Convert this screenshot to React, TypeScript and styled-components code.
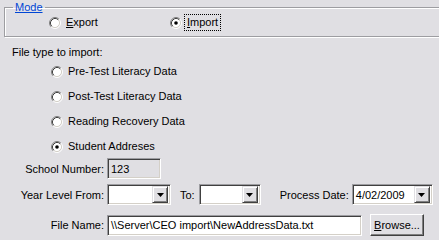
import React from 'react';
import styled, { createGlobalStyle } from 'styled-components';

const face = '#e0dfe3';

const GlobalStyle = createGlobalStyle`
	html, body {
		margin: 0;
		background: ${face};
		overflow: hidden;
	}
	body {
		font-family: 'Liberation Sans', Arial, sans-serif;
		font-size: 11px;
		color: #000;
	}
`;

const Page = styled.div`
	width: 439px;
	height: 239px;
	display: flex;
	flex-direction: column;
`;

const GroupBox = styled.fieldset`
	margin: 0 -20px 0 4px;
	padding: 0 0 5px 0;
	min-width: 0;
	border: 1px solid #9d9da1;
	box-shadow: inset 1px 1px 0 #fff, 1px 1px 0 #fff;
`;

const Legend = styled.legend`
	margin-left: 8px;
	padding: 0 2px;
	line-height: 14px;
	color: #0046d5;
	text-decoration: underline;
`;

const ModeRow = styled.div`
	display: grid;
	grid-template-columns: 121px auto;
	margin-left: 44px;
`;

const Caption = styled.div`
	margin: 9px 0 0 12px;
	line-height: 13px;
`;

const RadioList = styled.div`
	display: flex;
	flex-direction: column;
	gap: 8px;
	margin: 4px 0 0 51px;
`;

const RadioItem = styled.label`
	display: flex;
	align-items: center;
	gap: 2px;
	height: 17px;
`;

const RadioText = styled.span<{ $focused?: boolean }>`
	line-height: 15px;
	padding: 0 2px;
	border: 1px ${p => (p.$focused ? 'dotted #000' : 'solid transparent')};
	white-space: nowrap;
`;

const FieldRow = styled.div<{ $top: number; $height: number }>`
	display: flex;
	align-items: center;
	height: ${p => p.$height}px;
	margin-top: ${p => p.$top}px;
`;

const FieldLabel = styled.span<{ $width?: number; $gap?: number; $lead?: number }>`
	width: ${p => (p.$width ? `${p.$width}px` : 'auto')};
	margin-left: ${p => p.$lead ?? 0}px;
	margin-right: ${p => p.$gap ?? 3}px;
	text-align: right;
	white-space: nowrap;
`;

const sunken = `
	box-sizing: border-box;
	border: 1px solid;
	border-color: #9d9da1 #fff #fff #9d9da1;
	box-shadow: inset 1px 1px 0 #404040, inset -1px -1px 0 #d4d0c8;
`;

const TextBox = styled.div<{ $width: number; $readOnly?: boolean }>`
	${sunken}
	width: ${p => p.$width}px;
	height: 21px;
	padding: 0 3px;
	display: flex;
	align-items: center;
	background: ${p => (p.$readOnly ? face : '#fff')};
	white-space: nowrap;
	overflow: hidden;
`;

const Combo = styled.div<{ $width: number }>`
	${sunken}
	width: ${p => p.$width}px;
	height: 21px;
	padding: 2px;
	display: flex;
	align-items: center;
	background: #fff;
`;

const ComboValue = styled.span`
	flex: 1;
	padding-left: 1px;
	white-space: nowrap;
	overflow: hidden;
`;

const raised = `
	box-sizing: border-box;
	background: ${face};
	border: 1px solid;
	border-color: #fff #404040 #404040 #fff;
	box-shadow: inset -1px -1px 0 #808080;
`;

const DropButton = styled.span`
	${raised}
	border-color: ${face} #404040 #404040 ${face};
	box-shadow: inset 1px 1px 0 #fff, inset -1px -1px 0 #808080;
	width: 16px;
	height: 17px;
	display: flex;
	align-items: center;
	justify-content: center;
`;

const PushButton = styled.button`
	${raised}
	width: 54px;
	height: 22px;
	margin-left: 8px;
	padding: 0;
	font: inherit;
	color: #000;
`;

function RadioMark({ checked }: { checked?: boolean }) {
	return (
		<svg width="12" height="12" viewBox="0 0 12 12">
			<circle cx="6" cy="6" r="4.5" fill="#fff" />
			<path d="M2.11 9.89A5.5 5.5 0 0 1 9.89 2.11" fill="none" stroke="#808080" />
			<path d="M9.89 2.11A5.5 5.5 0 0 1 2.11 9.89" fill="none" stroke="#fff" />
			<path d="M2.82 9.18A4.5 4.5 0 0 1 9.18 2.82" fill="none" stroke="#404040" />
			<path d="M9.18 2.82A4.5 4.5 0 0 1 2.82 9.18" fill="none" stroke="#d4d0c8" />
			{checked && <circle cx="6" cy="6" r="1.8" fill="#000" />}
		</svg>
	);
}

function Radio({ label, checked, focused }: { label: React.ReactNode; checked?: boolean; focused?: boolean }) {
	return (
		<RadioItem>
			<RadioMark checked={checked} />
			<RadioText $focused={focused}>{label}</RadioText>
		</RadioItem>
	);
}

function DropDown({ width, value }: { width: number; value?: string }) {
	return (
		<Combo $width={width}>
			<ComboValue>{value}</ComboValue>
			<DropButton>
				<svg width="7" height="4" viewBox="0 0 7 4">
					<path d="M0 0h7L3.5 4z" fill="#000" />
				</svg>
			</DropButton>
		</Combo>
	);
}

const fileTypes = ['Pre-Test Literacy Data', 'Post-Test Literacy Data', 'Reading Recovery Data', 'Student Addreses'];

export default function App() {
	return (
		<Page>
			<GlobalStyle />
			<GroupBox>
				<Legend>Mode</Legend>
				<ModeRow>
					<Radio label={<><u>E</u>xport</>} />
					<Radio label={<><u>I</u>mport</>} checked focused />
				</ModeRow>
			</GroupBox>
			<Caption>File type to import:</Caption>
			<RadioList>
				{fileTypes.map((t, i) => (
					<Radio key={t} label={t} checked={i === fileTypes.length - 1} />
				))}
			</RadioList>
			<FieldRow $top={3} $height={21}>
				<FieldLabel $width={104}>School Number:</FieldLabel>
				<TextBox $width={54} $readOnly>123</TextBox>
			</FieldRow>
			<FieldRow $top={5} $height={21}>
				<FieldLabel $width={104}>Year Level From:</FieldLabel>
				<DropDown width={64} />
				<FieldLabel $lead={9} $gap={4}>To:</FieldLabel>
				<DropDown width={62} />
				<FieldLabel $lead={19} $gap={3}>Process Date:</FieldLabel>
				<DropDown width={81} value="4/02/2009" />
			</FieldRow>
			<FieldRow $top={9} $height={22}>
				<FieldLabel $width={104}>File Name:</FieldLabel>
				<TextBox $width={255}>{'\\\\Server\\CEO import\\NewAddressData.txt'}</TextBox>
				<PushButton>
					<u>B</u>rowse...
				</PushButton>
			</FieldRow>
		</Page>
	);
}
